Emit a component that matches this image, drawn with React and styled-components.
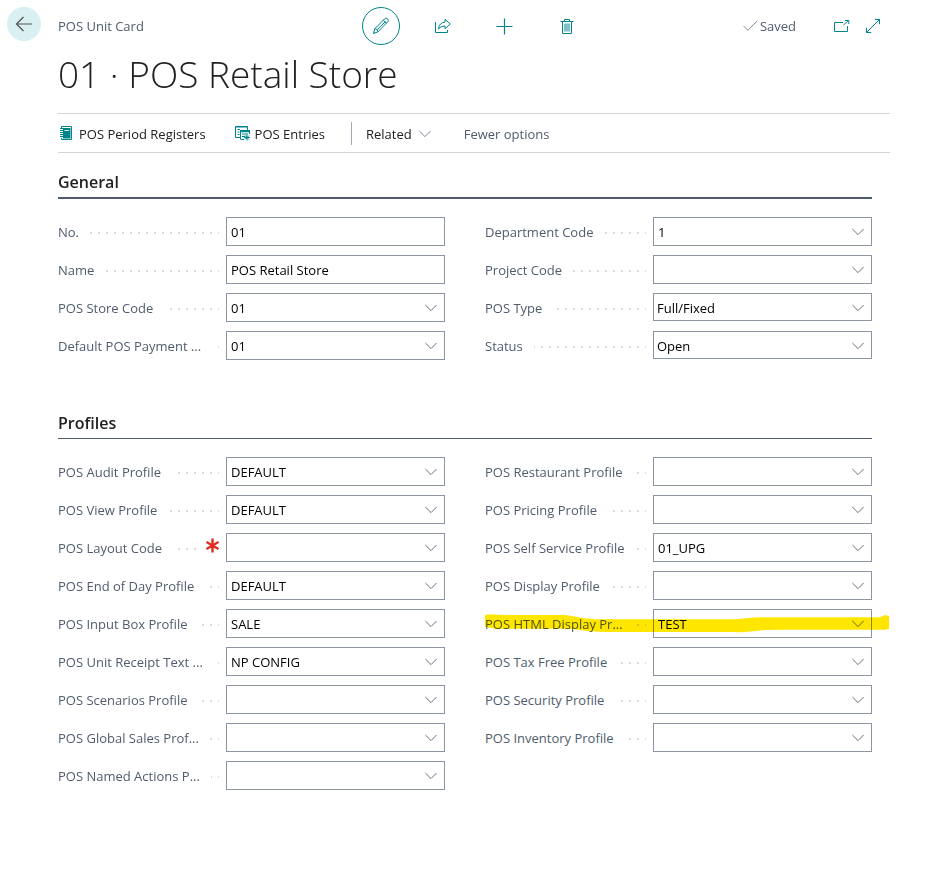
import React, { useId, useState } from "react";
import styled, { createGlobalStyle, css } from "styled-components";

const teal = "#00848b";
const slate = "#505c6d";
const border = "#8d95a3";

const GlobalStyle = createGlobalStyle`
  *, *::before, *::after { box-sizing: border-box; }
  body {
    margin: 0;
    background: #fff;
    color: #212121;
    font: 13px/20px "Open Sans", "Noto Sans", sans-serif;
  }
  button, input, select { font: inherit; color: inherit; }
`;

const Page = styled.div`
  padding-bottom: 40px;
`;

const Header = styled.header`
  display: grid;
  grid-template-columns: 1fr auto 1fr;
  align-items: start;
  padding: 7px 9px 0 7px;
`;

const Crumb = styled.div`
  display: flex;
  gap: 17px;
  line-height: 38px;
  color: ${slate};
`;

const IconButton = styled.button`
  display: grid;
  place-items: center;
  width: ${(p) => p.$width || 38}px;
  height: 38px;
  padding: 0;
  border: 1px solid ${(p) => (p.$ring ? teal : "transparent")};
  border-radius: 50%;
  background: none;
  color: ${teal};
  cursor: pointer;
`;

const BackButton = styled(IconButton)`
  width: 34px;
  height: 34px;
  border: 0;
  background: #d9f0f2;
  color: #505050;
`;

const Actions = styled.div`
  display: flex;
  gap: 24px;
`;

const Status = styled.div`
  display: flex;
  justify-content: flex-end;
  align-items: center;
  padding-right: 51px;
`;

const Saved = styled.span`
  display: flex;
  align-items: center;
  gap: 2px;
  margin-right: 29px;
  color: ${slate};
`;

const CheckMark = styled.span`
  display: grid;
  color: #7c8592;
`;

const Content = styled.main`
  padding: 0 59px 0 58px;
`;

const Title = styled.h1`
  margin: 4px 0 15px;
  font-size: 37px;
  line-height: 49px;
  font-weight: 300;
`;

const Toolbar = styled.nav`
  display: flex;
  align-items: center;
  height: 40px;
  padding-top: 1px;
  border: solid #d4d4d4;
  border-width: 1px 0;
`;

const ToolButton = styled.button`
  display: flex;
  align-items: center;
  gap: ${(p) => p.$gap || 5}px;
  padding: 0;
  margin-right: ${(p) => p.$after || 0}px;
  border: 0;
  background: none;
  color: ${(p) => (p.$muted ? slate : "#212121")};
  white-space: nowrap;
  cursor: pointer;
`;

const ToolIcon = styled.span`
  display: grid;
  color: ${(p) => (p.$muted ? "#7c8592" : teal)};
`;

const Divider = styled.span`
  width: 1px;
  height: 23px;
  margin-right: 14px;
  background: #a3aab5;
`;

const Section = styled.section`
  margin: 16px 18px 0 0;
  & + & { margin-top: 50px; }
`;

const SectionTitle = styled.h2`
  margin: 0 0 18px;
  padding-bottom: 1px;
  border-bottom: ${(p) => (p.$thick ? 2 : 1)}px solid ${slate};
  font-size: 16px;
  line-height: 27px;
  font-weight: 600;
`;

const Columns = styled.div`
  display: grid;
  grid-template-columns: 1fr 1fr;
  gap: 40px;
  align-items: start;
`;

const Column = styled.div`
  display: grid;
  gap: 9px;
`;

const Row = styled.div`
  position: relative;
  display: flex;
  align-items: flex-start;
  gap: 7px;
  height: 29px;
`;

const Leader = styled.div`
  display: flex;
  justify-content: space-between;
  flex: 0 0 161px;
  height: 29px;
  background: linear-gradient(90deg, #dadada 2px, transparent 2px) 0 15px / 8px 2px repeat-x;
`;

const Label = styled.label`
  padding-right: 11px;
  background: #fff;
  color: ${slate};
  line-height: 31px;
  white-space: nowrap;
`;

const Required = styled.span`
  padding: 5px 0 0 6px;
  background: #fff;
  line-height: 0;
`;

const Box = styled.div`
  position: relative;
  display: flex;
  align-items: center;
  flex: 1;
  min-width: 0;
  height: ${(p) => (p.$short ? 28 : 29)}px;
  border: 1px solid ${border};
`;

const control = css`
  flex: 1;
  min-width: 0;
  width: 100%;
  height: 100%;
  border: 0;
  outline: 0;
  background: transparent;
  color: #000;
`;

const TextInput = styled.input`
  ${control}
  padding: 0 4px;
`;

const Choice = styled.select`
  ${control}
  appearance: none;
  padding: 1px 28px 0 3px;
`;

const Lookup = styled.button`
  display: grid;
  place-items: center;
  width: 27px;
  height: 100%;
  padding: 0;
  border: 0;
  background: none;
  color: #6b717b;
`;

const ChoiceArrow = styled.span`
  position: absolute;
  right: 0;
  display: grid;
  place-items: center;
  width: 27px;
  height: 100%;
  color: #6b717b;
  pointer-events: none;
`;

const Marker = styled.svg`
  position: absolute;
  left: 0;
  top: 5px;
  width: calc(100% + 17px);
  height: 19px;
  mix-blend-mode: multiply;
  pointer-events: none;
`;

function Icon({ w = 16, h = w, children, sw = 1 }) {
  return (
    <svg width={w} height={h} viewBox={`0 0 ${w} ${h}`} fill="none" stroke="currentColor" strokeWidth={sw} aria-hidden="true">
      {children}
    </svg>
  );
}

const Chevron = () => (
  <Icon w={12} h={9}><path d="M.4 2 6 7.6 11.6 2" /></Icon>
);

const BackIcon = () => (
  <Icon w={18} h={16} sw={1.2}><path d="M17 8H1.5M8.5 1l-7 7 7 7" /></Icon>
);

const PencilIcon = () => (
  <Icon w={18} h={18}>
    <path d="M1.5 16.5 2.8 11.7 12.6 1.9c.9-.9 2.1-.9 3 0s.9 2.1 0 3L5.8 14.9ZM2.8 11.7c1.6.1 2.9 1.4 3 3.2M11.3 3.2l3.2 3.1M4.8 13 13.4 4.6M1.8 15.4l.9.8" />
  </Icon>
);

const ShareIcon = () => (
  <Icon w={18} h={16}>
    <path d="M1.5 4v10.5h12V12" />
    <path d="M11 1.3 16.3 6 11 10.7V8.2C8.2 8 6.3 8.9 4.5 11c.4-4 2.6-6.6 6.5-7Z" />
  </Icon>
);

const PlusIcon = () => (
  <Icon w={17} sw={1.2}><path d="M8.5.5v16M.5 8.5h16" /></Icon>
);

const TrashIcon = () => (
  <Icon w={14} h={17}>
    <path d="M.5 3.5h13M4.5 3.5v-2h5v2M2.5 3.5v12h9v-12" />
    <path d="M4 5.5h6v8H4Z" fill="currentColor" fillOpacity=".5" stroke="none" />
  </Icon>
);

const CheckIcon = () => (
  <Icon w={15} h={12}><path d="m.8 6.3 4 4L14.2 1" /></Icon>
);

const PopoutIcon = () => (
  <Icon w={17} h={14}>
    <path d="M10 3.5H1.5v9h13V7M10.5 6 15.5 1.5M12 1.5h3.8V5" />
  </Icon>
);

const ExpandIcon = () => (
  <Icon w={16} h={16}>
    <path d="M1.5 14.5l13-13M9.8 1.5h4.7v4.7M1.5 9.8v4.7h4.7" />
  </Icon>
);

const RegisterIcon = () => (
  <Icon w={16} h={15}>
    <path d="M3.5 2V.5h10v13h-10V12M2 2.5h3M2 4.5h3M2 6.5h3M2 8.5h3M2 10.5h3" />
    <path d="M5 2h7.5v10.5H5Z" fill="currentColor" stroke="none" />
    <path d="M6.5 4.5h4.5" stroke="#fff" />
  </Icon>
);

const EntriesIcon = () => (
  <Icon w={15} h={15}>
    <path d="M5 11.5H.5V.5h12V4M.5 1h12M2.5 3.5H5M2.5 6h2M2.5 8.5h2" />
    <path d="M5.5 13.5v-9h9V8" />
    <path d="M5 4h10v2.2H5ZM7 7.4h6v1H7ZM7 10h3v1H7Z" fill="currentColor" stroke="none" />
    <path d="M6 13.5h3M12 8.6v5.8M9.2 11.5H15M10 9.5l4 4M14 9.5l-4 4" />
  </Icon>
);

const Star = () => (
  <svg width="13" height="15" viewBox="0 0 13 15" stroke="#e22b20" strokeWidth="2.4" aria-hidden="true">
    <path d="M6.5.5v14M.5 4l12 7M12.5 4l-12 7" />
  </svg>
);

function Highlight() {
  return (
    <Marker viewBox="0 0 404 18" preserveAspectRatio="none" aria-hidden="true">
      <path
        fill="#ffe600"
        d="M0 1C4 0 12 1 25 1H80C95 3 100 5 115 5H250C262 4 265 3 280 3H395L400 1 404 2V14L400 15H290C270 15 262 18 248 17H120C105 17 95 15 85 14H10L0 12Z"
      />
    </Marker>
  );
}

function Field({ label, value = "", kind = "lookup", required, marked }) {
  const id = useId();
  const [text, setText] = useState(value);
  const onChange = (e) => setText(e.target.value);
  return (
    <Row>
      <Leader>
        <Label htmlFor={id}>{label}</Label>
        {required && <Required><Star /></Required>}
      </Leader>
      <Box $short={kind === "select"}>
        {kind === "select" ? (
          <>
            <Choice id={id} value={text} onChange={onChange}>
              <option>{value}</option>
            </Choice>
            <ChoiceArrow><Chevron /></ChoiceArrow>
          </>
        ) : (
          <TextInput id={id} value={text} onChange={onChange} required={required} />
        )}
        {kind === "lookup" && (
          <Lookup type="button" aria-label={`Choose a value for ${label}`}><Chevron /></Lookup>
        )}
      </Box>
      {marked && <Highlight />}
    </Row>
  );
}

const sections = [
  {
    title: "General",
    thick: true,
    columns: [
      [
        { label: "No.", value: "01", kind: "text" },
        { label: "Name", value: "POS Retail Store", kind: "text" },
        { label: "POS Store Code", value: "01" },
        { label: "Default POS Payment ...", value: "01" },
      ],
      [
        { label: "Department Code", value: "1" },
        { label: "Project Code" },
        { label: "POS Type", value: "Full/Fixed", kind: "select" },
        { label: "Status", value: "Open", kind: "select" },
      ],
    ],
  },
  {
    title: "Profiles",
    columns: [
      [
        { label: "POS Audit Profile", value: "DEFAULT" },
        { label: "POS View Profile", value: "DEFAULT" },
        { label: "POS Layout Code", required: true },
        { label: "POS End of Day Profile", value: "DEFAULT" },
        { label: "POS Input Box Profile", value: "SALE" },
        { label: "POS Unit Receipt Text ...", value: "NP CONFIG" },
        { label: "POS Scenarios Profile" },
        { label: "POS Global Sales Prof..." },
        { label: "POS Named Actions P..." },
      ],
      [
        { label: "POS Restaurant Profile" },
        { label: "POS Pricing Profile" },
        { label: "POS Self Service Profile", value: "01_UPG" },
        { label: "POS Display Profile" },
        { label: "POS HTML Display Pr...", value: "TEST", marked: true },
        { label: "POS Tax Free Profile" },
        { label: "POS Security Profile" },
        { label: "POS Inventory Profile" },
      ],
    ],
  },
];

export default function App() {
  return (
    <Page>
      <GlobalStyle />
      <Header>
        <Crumb>
          <BackButton aria-label="Back"><BackIcon /></BackButton>
          POS Unit Card
        </Crumb>
        <Actions>
          <IconButton $ring aria-label="Edit"><PencilIcon /></IconButton>
          <IconButton aria-label="Share"><ShareIcon /></IconButton>
          <IconButton aria-label="New"><PlusIcon /></IconButton>
          <IconButton aria-label="Delete"><TrashIcon /></IconButton>
        </Actions>
        <Status>
          <Saved><CheckMark><CheckIcon /></CheckMark>Saved</Saved>
          <IconButton $width={32} aria-label="Open in new window"><PopoutIcon /></IconButton>
          <IconButton $width={32} aria-label="Expand"><ExpandIcon /></IconButton>
        </Status>
      </Header>
      <Content>
        <Title>01 · POS Retail Store</Title>
        <Toolbar>
          <ToolButton $after={29}><ToolIcon><RegisterIcon /></ToolIcon>POS Period Registers</ToolButton>
          <ToolButton $after={26}><ToolIcon><EntriesIcon /></ToolIcon>POS Entries</ToolButton>
          <Divider />
          <ToolButton $after={33} $gap={7}>Related <ToolIcon $muted><Chevron /></ToolIcon></ToolButton>
          <ToolButton $muted>Fewer options</ToolButton>
        </Toolbar>
        {sections.map((s) => (
          <Section key={s.title}>
            <SectionTitle $thick={s.thick}>{s.title}</SectionTitle>
            <Columns>
              {s.columns.map((fields, i) => (
                <Column key={i}>
                  {fields.map((f) => <Field key={f.label} {...f} />)}
                </Column>
              ))}
            </Columns>
          </Section>
        ))}
      </Content>
    </Page>
  );
}
